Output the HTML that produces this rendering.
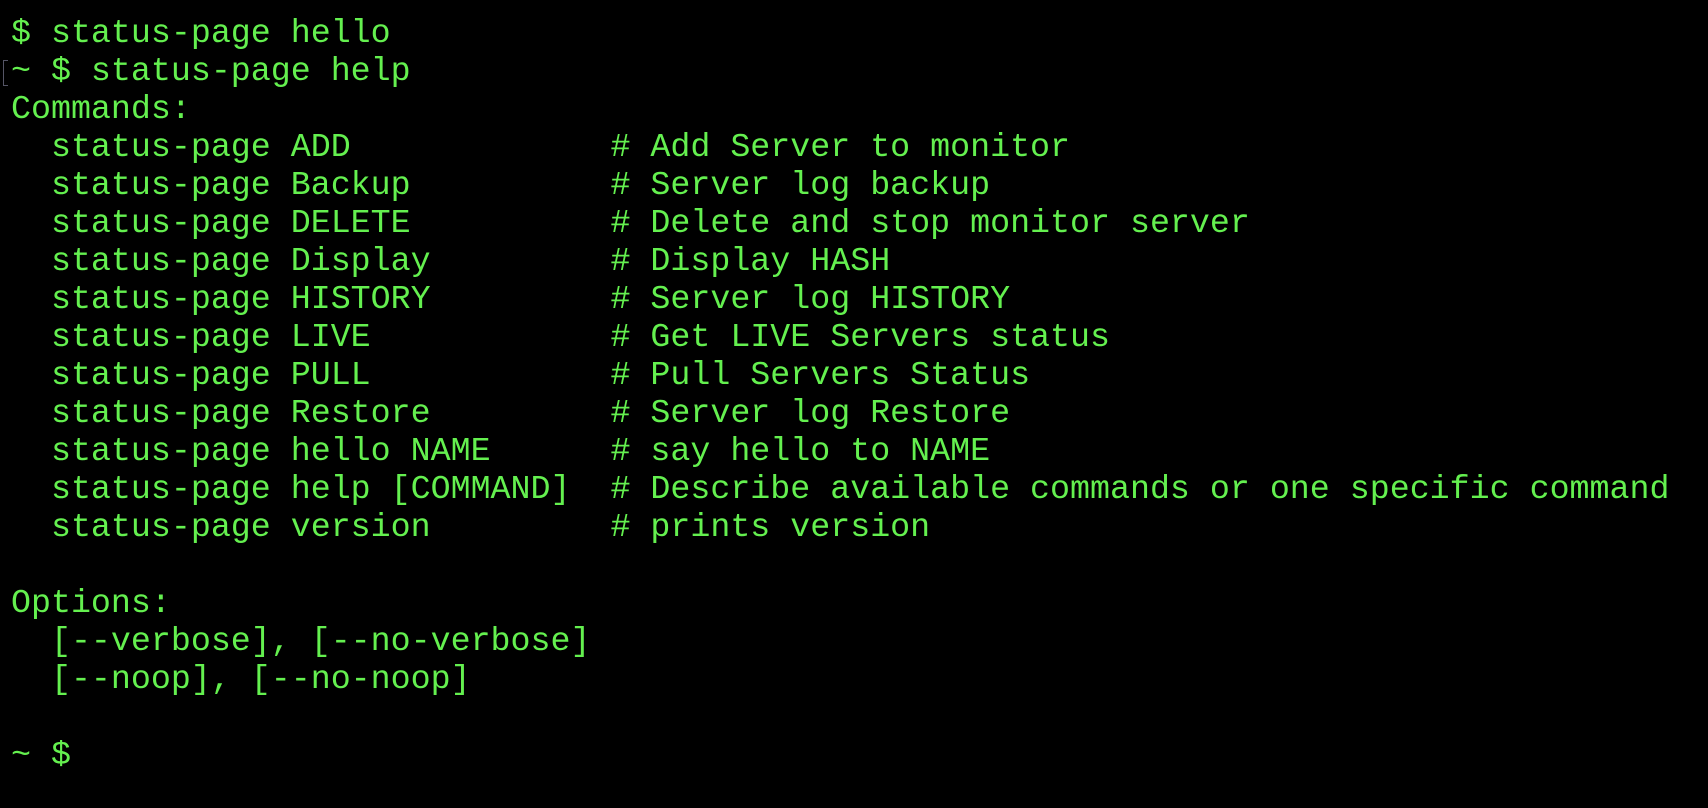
<!DOCTYPE html>
<html><head><meta charset="utf-8"><style>
html,body{margin:0;padding:0;background:#000;width:1708px;height:808px;overflow:hidden}
pre{position:absolute;left:11px;top:14px;margin:0;font-family:"Liberation Mono",monospace;font-size:33.3px;line-height:38px;color:#64f04f;}
.b{position:absolute;left:3px;top:60px;width:4px;height:24px;border:1.5px solid #556;border-right:none;}
</style></head><body>
<div class="b"></div>
<pre>$ status-page hello
~ $ status-page help
Commands:
  status-page ADD             # Add Server to monitor
  status-page Backup          # Server log backup
  status-page DELETE          # Delete and stop monitor server
  status-page Display         # Display HASH
  status-page HISTORY         # Server log HISTORY
  status-page LIVE            # Get LIVE Servers status
  status-page PULL            # Pull Servers Status
  status-page Restore         # Server log Restore
  status-page hello NAME      # say hello to NAME
  status-page help [COMMAND]  # Describe available commands or one specific command
  status-page version         # prints version

Options:
  [--verbose], [--no-verbose]
  [--noop], [--no-noop]

~ $</pre>
</body></html>
